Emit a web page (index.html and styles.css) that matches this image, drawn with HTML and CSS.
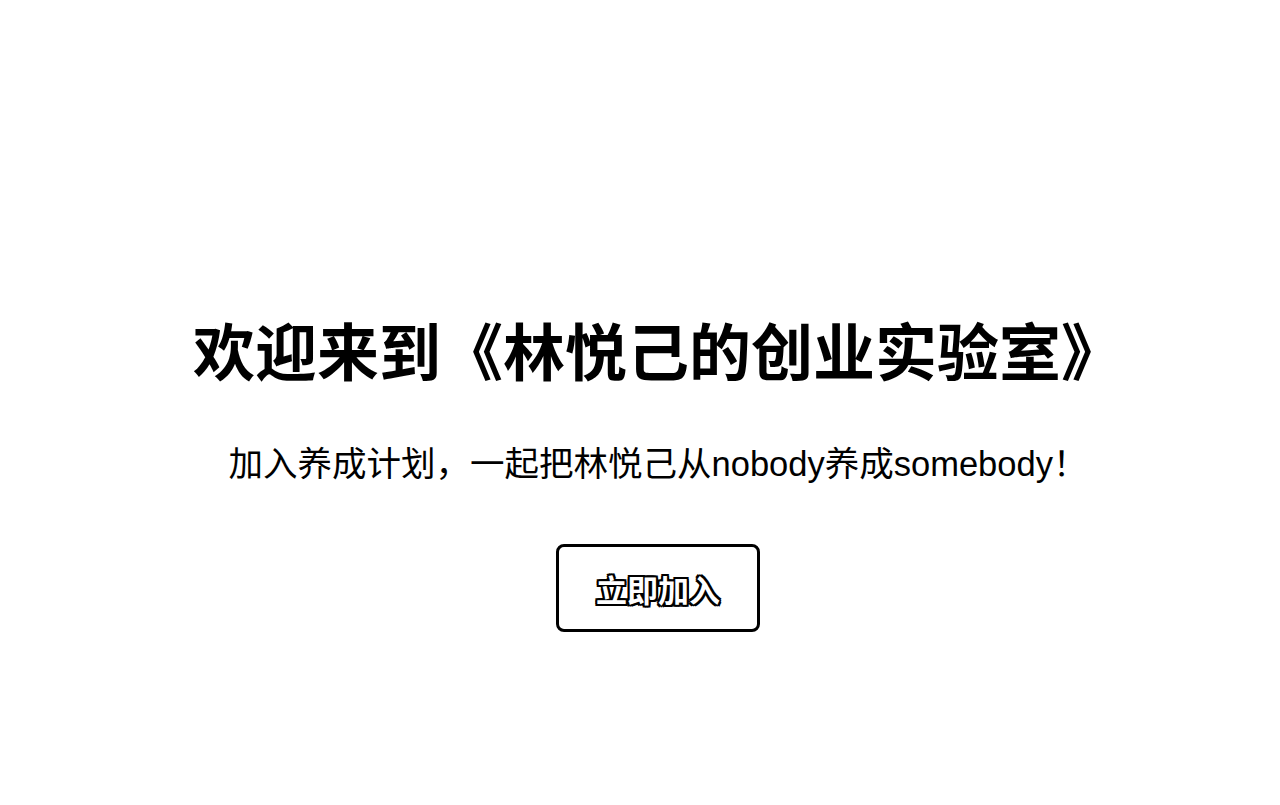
FILE: index.html
```html
<!DOCTYPE html>
<html lang="zh-CN">
<head>
<meta charset="utf-8">
<title>林悦己的创业实验室</title>
<link rel="stylesheet" href="styles.css">
</head>
<body>
<main class="hero">
  <h1 class="title">欢迎来到《林悦己的创业实验室》</h1>
  <p class="subtitle">加入养成计划，一起把林悦己从nobody养成somebody！</p>
  <button class="join" type="button">立即加入</button>
</main>
</body>
</html>
```

FILE: styles.css
```css
html, body {
  margin: 0;
  padding: 0;
  background: #ffffff;
}

body {
  font-family: "Liberation Sans", "Noto Sans CJK SC", sans-serif;
  color: #000000;
}

.hero {
  display: flex;
  flex-direction: column;
  align-items: center;
  padding-top: 312px;
  padding-left: 36px;
}

.title {
  margin: 0;
  font-family: "Noto Sans CJK SC", sans-serif;
  font-size: 62px;
  font-weight: 700;
  line-height: 74px;
  letter-spacing: 0;
}

.subtitle {
  margin: 58px 0 0;
  font-family: "Liberation Sans", "Noto Sans CJK SC", sans-serif;
  font-size: 34.5px;
  font-weight: 400;
  line-height: 40px;
}

.join {
  margin-top: 60px;
  width: 204px;
  height: 88px;
  box-sizing: border-box;
  border: 3px solid #000000;
  border-radius: 8px;
  background: #ffffff;
  font-family: "Noto Sans CJK SC", sans-serif;
  font-size: 31px;
  font-weight: 700;
  color: #ffffff;
  text-shadow:
    2px 0 0 #000, -2px 0 0 #000, 0 2px 0 #000, 0 -2px 0 #000,
    2px 2px 0 #000, -2px -2px 0 #000, 2px -2px 0 #000, -2px 2px 0 #000;
  cursor: pointer;
  padding: 0;
}
```
